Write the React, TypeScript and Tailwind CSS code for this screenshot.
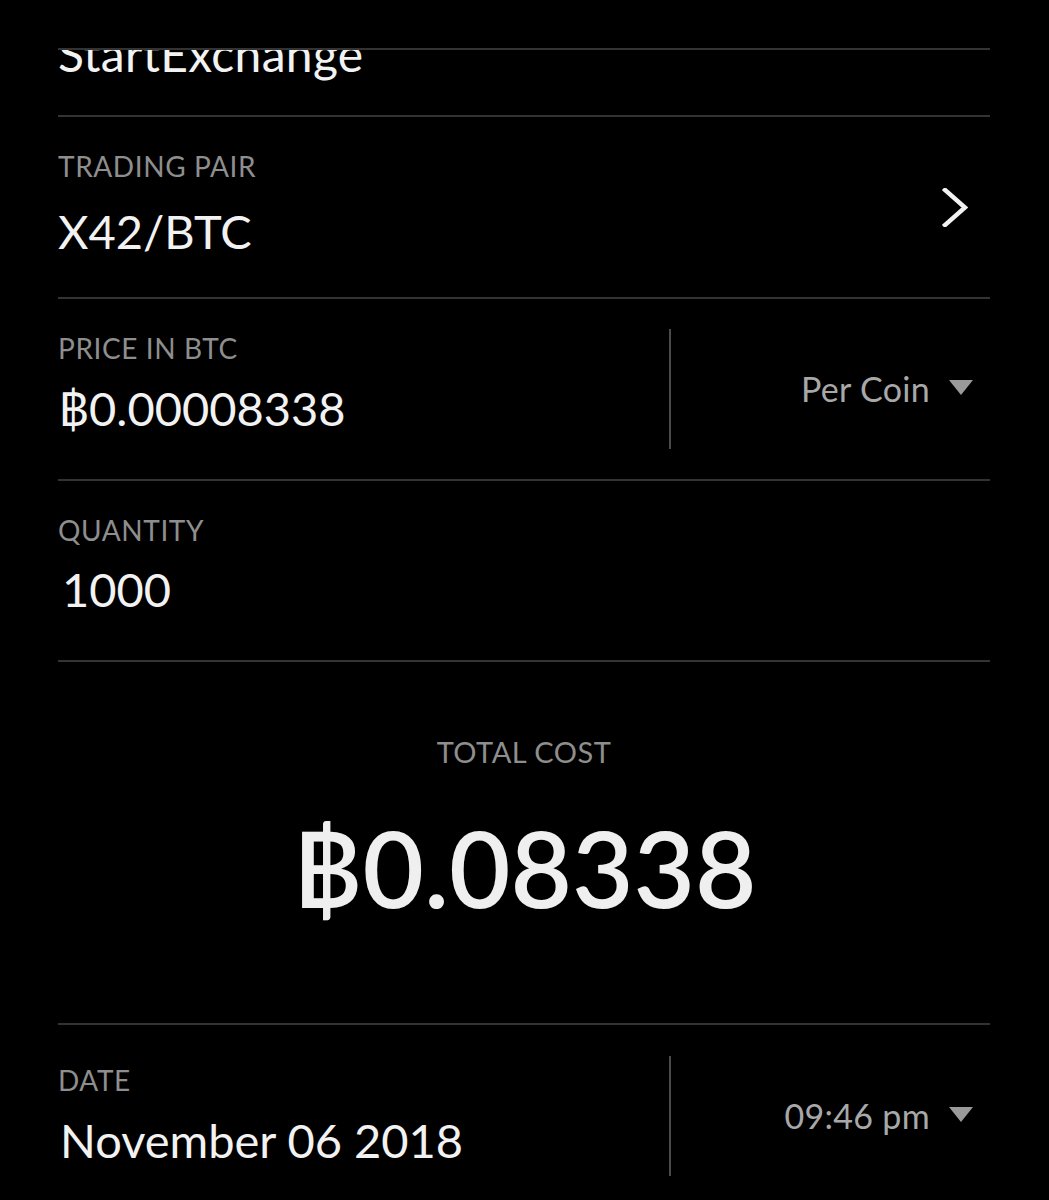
import React from 'react';

const font = { fontFamily: 'Lato, "Noto Sans", "DejaVu Sans", sans-serif' };

const Caret = () => (
  <svg width="24" height="15" viewBox="0 0 24 15" className="block">
    <polygon points="0,0 24,0 12,15" fill="#9a9a9a" />
  </svg>
);

const Chevron = () => (
  <svg width="26" height="39" viewBox="0 0 26 39" className="block">
    <polyline points="3,2 23,19.5 3,37" fill="none" stroke="#f2f2f2" strokeWidth="4.5" strokeLinecap="square" />
  </svg>
);

const Label = ({ children }: { children: React.ReactNode }) => (
  <div className="text-[28px] leading-none tracking-[0.6px] text-[#8e8e8e]">{children}</div>
);

const Value = ({ children }: { children: React.ReactNode }) => (
  <div className="text-[47px] leading-none text-[#f2f2f2] whitespace-nowrap">{children}</div>
);

const Picker = ({ text }: { text: string }) => (
  <div className="flex items-center">
    <div className="w-[2px] h-[120px] bg-[#4a4a4a]" />
    <div className="flex flex-1 items-center justify-end gap-[19px] pr-[17px]">
      <span className="text-[34px] leading-none tracking-[0.3px] text-[#a8a8a8]">{text}</span>
      <div className="-mt-[4px]">
        <Caret />
      </div>
    </div>
  </div>
);

export default function App() {
  return (
    <div className="min-h-[1200px] bg-black overflow-hidden" style={font}>
      <div className="ml-[58px] mr-[59px]">
        {/* header edge */}
        <div className="h-[50px] border-b-2 border-[#333]" />

        {/* exchange, scrolled under the header */}
        <div className="h-[67px] overflow-hidden border-b-2 border-[#333]">
          <div className="-mt-[20px] text-[48px] leading-none tracking-[0.3px] text-[#f2f2f2]">StartExchange</div>
        </div>

        {/* trading pair */}
        <div className="flex h-[182px] items-center border-b-2 border-[#333]">
          <div className="flex flex-1 flex-col self-start pt-[35px]">
            <Label>TRADING PAIR</Label>
            <div className="mt-[28px]">
              <Value>X42/BTC</Value>
            </div>
          </div>
          <div className="mr-[22px]">
            <Chevron />
          </div>
        </div>

        {/* price */}
        <div className="flex h-[182px] border-b-2 border-[#333]">
          <div className="flex w-[611px] flex-col pt-[35px]">
            <Label>PRICE IN BTC</Label>
            <div className="mt-[23px]">
              <Value>฿0.00008338</Value>
            </div>
          </div>
          <div className="flex-1 self-center">
            <Picker text="Per Coin" />
          </div>
        </div>

        {/* quantity */}
        <div className="flex h-[181px] flex-col border-b-2 border-[#333] pt-[35px]">
          <Label>QUANTITY</Label>
          <div className="mt-[22px] pl-[4px]">
            <Value>1000</Value>
          </div>
        </div>

        {/* total */}
        <div className="flex h-[363px] flex-col items-center border-b-2 border-[#333] pt-[75px]">
          <div className="text-[29px] leading-none tracking-[0.5px] text-[#8e8e8e]">TOTAL COST</div>
          <div className="mt-[48px] text-[106px] font-semibold leading-none text-[#efefef] whitespace-nowrap">
            ฿0.08338
          </div>
        </div>

        {/* date */}
        <div className="flex h-[182px]">
          <div className="flex w-[611px] flex-col pt-[41px]">
            <Label>DATE</Label>
            <div className="mt-[23px] pl-[2px]">
              <Value>November 06 2018</Value>
            </div>
          </div>
          <div className="flex-1 self-center">
            <Picker text="09:46 pm" />
          </div>
        </div>
      </div>
    </div>
  );
}
